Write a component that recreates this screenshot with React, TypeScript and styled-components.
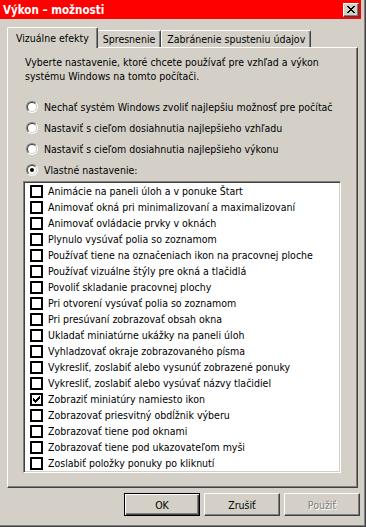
import React from "react";
import styled, { createGlobalStyle, css } from "styled-components";

const Global = createGlobalStyle`
  html, body { margin: 0; padding: 0; background: #d4d0c8; }
  body {
    font-family: "DejaVu Sans Condensed", "DejaVu Sans", sans-serif;
    font-stretch: condensed;
    font-size: 10.5px;
    color: #000;
  }
  * { box-sizing: border-box; }
`;

const Frame = styled.div`
  width: 366px;
  height: 527px;
  background: #d4d0c8;
  border-right: 1px solid #404040;
  border-bottom: 1px solid #404040;
  box-shadow: inset -1px -1px 0 #808080;
  padding: 0 4px 3px 0;
  display: flex;
  flex-direction: column;
`;

const TitleBar = styled.div`
  height: 19px;
  background: #ff0000;
  display: flex;
  align-items: center;
  justify-content: space-between;
  padding: 0 2px 0 3px;
`;

const Title = styled.span`
  color: #fff;
  font-weight: bold;
  font-size: 11.5px;
`;

const CloseButton = styled.div`
  width: 16px;
  height: 14px;
  background: #d4d0c8;
  border-top: 1px solid #fff;
  border-left: 1px solid #fff;
  border-right: 1px solid #404040;
  border-bottom: 1px solid #404040;
  box-shadow: inset -1px -1px 0 #808080;
  display: flex;
  align-items: center;
  justify-content: center;
`;

const Body = styled.div`
  flex: 1;
  display: flex;
  flex-direction: column;
  padding: 8px 0 0 7px;
`;

const TabRow = styled.div`
  display: flex;
  align-items: flex-end;
  height: 20px;
`;

const Tab = styled.div<{ $active?: boolean }>`
  position: relative;
  height: 17px;
  display: flex;
  align-items: center;
  padding: 0 5px;
  background: #d4d0c8;
  border-top: 1px solid #fff;
  border-left: 1px solid #fff;
  border-right: 1px solid #404040;
  border-radius: 2px 2px 0 0;
  box-shadow: inset -1px 0 0 #808080;
  white-space: nowrap;
  ${(p) =>
    p.$active &&
    css`
      height: 21px;
      margin-bottom: -1px;
      padding: 0 8px 1px 8px;
      margin-right: -1px;
      z-index: 1;
    `}
`;

const Panel = styled.div`
  width: 351px;
  height: 441px;
  border-top: 1px solid #fff;
  border-left: 1px solid #fff;
  border-right: 1px solid #404040;
  border-bottom: 1px solid #404040;
  box-shadow: inset -1px -1px 0 #808080;
  padding: 7px 0 0 17px;
  display: flex;
  flex-direction: column;
`;

const Description = styled.p`
  margin: 0;
  line-height: 14px;
  width: 310px;
`;

const RadioGroup = styled.div`
  margin-top: 13px;
  display: flex;
  flex-direction: column;
`;

const RadioRow = styled.div`
  height: 21px;
  display: flex;
  align-items: center;
  gap: 6px;
  padding-left: 1px;
`;

const RadioCircle = styled.span<{ $checked?: boolean }>`
  position: relative;
  width: 12px;
  height: 12px;
  border-radius: 50%;
  border: 1px solid;
  border-color: #808080 #fff #fff #808080;
  flex-shrink: 0;
  &::before {
    content: "";
    position: absolute;
    inset: 0;
    border-radius: 50%;
    border: 1px solid;
    border-color: #404040 #d4d0c8 #d4d0c8 #404040;
    background: #fff;
  }
  &::after {
    content: "";
    position: absolute;
    left: 3px;
    top: 3px;
    width: 4px;
    height: 4px;
    border-radius: 50%;
    background: #000;
    display: ${(p) => (p.$checked ? "block" : "none")};
  }
`;

const ListBox = styled.div`
  margin: 1px 0 0 -2px;
  width: 318px;
  height: 292px;
  background: #fff;
  border-top: 1px solid #808080;
  border-left: 1px solid #808080;
  border-right: 1px solid #fff;
  border-bottom: 1px solid #fff;
  box-shadow: inset 1px 1px 0 #404040, inset -1px -1px 0 #d4d0c8;
  padding: 1px 1px;
  display: flex;
  flex-direction: column;
`;

const Item = styled.div`
  height: 16px;
  display: flex;
  align-items: center;
  gap: 5px;
  padding-left: 5px;
  white-space: nowrap;
`;

const CheckBox = styled.span`
  width: 13px;
  height: 13px;
  border: 2px solid #000;
  background: #fff;
  display: flex;
  align-items: center;
  justify-content: center;
  flex-shrink: 0;
`;

const ButtonRow = styled.div`
  display: flex;
  justify-content: flex-end;
  gap: 4px;
  margin-top: 5px;
  padding-right: 1px;
`;

const Button = styled.div<{ $default?: boolean; $disabled?: boolean }>`
  width: 76px;
  height: 23px;
  display: flex;
  align-items: center;
  justify-content: center;
  background: #d4d0c8;
  border-top: 1px solid #fff;
  border-left: 1px solid #fff;
  border-right: 1px solid #404040;
  border-bottom: 1px solid #404040;
  box-shadow: inset -1px -1px 0 #808080;
  ${(p) =>
    p.$default &&
    css`
      border: 1px solid #000;
      box-shadow: inset 1px 1px 0 #fff, inset -1px -1px 0 #404040, inset -2px -2px 0 #808080;
    `}
  ${(p) =>
    p.$disabled &&
    css`
      color: #808080;
      text-shadow: 1px 1px 0 #fff;
    `}
`;

const items: { label: string; checked?: boolean }[] = [
  { label: "Animácie na paneli úloh a v ponuke Štart" },
  { label: "Animovať okná pri minimalizovaní a maximalizovaní" },
  { label: "Animovať ovládacie prvky v oknách" },
  { label: "Plynulo vysúvať polia so zoznamom" },
  { label: "Používať tiene na označeniach ikon na pracovnej ploche" },
  { label: "Používať vizuálne štýly pre okná a tlačidlá" },
  { label: "Povoliť skladanie pracovnej plochy" },
  { label: "Pri otvorení vysúvať polia so zoznamom" },
  { label: "Pri presúvaní zobrazovať obsah okna" },
  { label: "Ukladať miniatúrne ukážky na paneli úloh" },
  { label: "Vyhladzovať okraje zobrazovaného písma" },
  { label: "Vykresliť, zoslabiť alebo vysunúť zobrazené ponuky" },
  { label: "Vykresliť, zoslabiť alebo vysúvať názvy tlačidiel" },
  { label: "Zobraziť miniatúry namiesto ikon", checked: true },
  { label: "Zobrazovať priesvitný obdĺžnik výberu" },
  { label: "Zobrazovať tiene pod oknami" },
  { label: "Zobrazovať tiene pod ukazovateľom myši" },
  { label: "Zoslabiť položky ponuky po kliknutí" },
];

const radios = [
  { label: "Nechať systém Windows zvoliť najlepšiu možnosť pre počítač" },
  { label: "Nastaviť s cieľom dosiahnutia najlepšieho vzhľadu" },
  { label: "Nastaviť s cieľom dosiahnutia najlepšieho výkonu" },
  { label: "Vlastné nastavenie:", checked: true },
];

export default function App() {
  return (
    <>
      <Global />
      <Frame>
        <TitleBar>
          <Title>Výkon – možnosti</Title>
          <CloseButton>
            <svg width="8" height="7" viewBox="0 0 8 7">
              <path d="M0 0h2v1h1v1h2V1h1V0h2v1H7v1H6v1H5v1h1v1h1v1h1v1H6V6H5V5H3v1H2v1H0V6h1V5h1V4h1V3H2V2H1V1H0z" fill="#000" />
            </svg>
          </CloseButton>
        </TitleBar>
        <Body>
          <TabRow>
            <Tab $active>Vizuálne efekty</Tab>
            <Tab>Spresnenie</Tab>
            <Tab>Zabránenie spusteniu údajov</Tab>
          </TabRow>
          <Panel>
            <Description>
              Vyberte nastavenie, ktoré chcete používať pre vzhľad a výkon systému Windows na tomto počítači.
            </Description>
            <RadioGroup>
              {radios.map((r) => (
                <RadioRow key={r.label}>
                  <RadioCircle $checked={r.checked} />
                  <span>{r.label}</span>
                </RadioRow>
              ))}
            </RadioGroup>
            <ListBox>
              {items.map((it) => (
                <Item key={it.label}>
                  <CheckBox>
                    {it.checked && (
                      <svg width="7" height="7" viewBox="0 0 7 7">
                        <path d="M0 2h1v1h1v1h1V3h1V2h1V1h1V0h1v3H6v1H5v1H4v1H3v1H2V6H1V5H0z" fill="#000" />
                      </svg>
                    )}
                  </CheckBox>
                  <span>{it.label}</span>
                </Item>
              ))}
            </ListBox>
          </Panel>
          <ButtonRow>
            <Button $default>OK</Button>
            <Button>Zrušiť</Button>
            <Button $disabled>Použiť</Button>
          </ButtonRow>
        </Body>
      </Frame>
    </>
  );
}
